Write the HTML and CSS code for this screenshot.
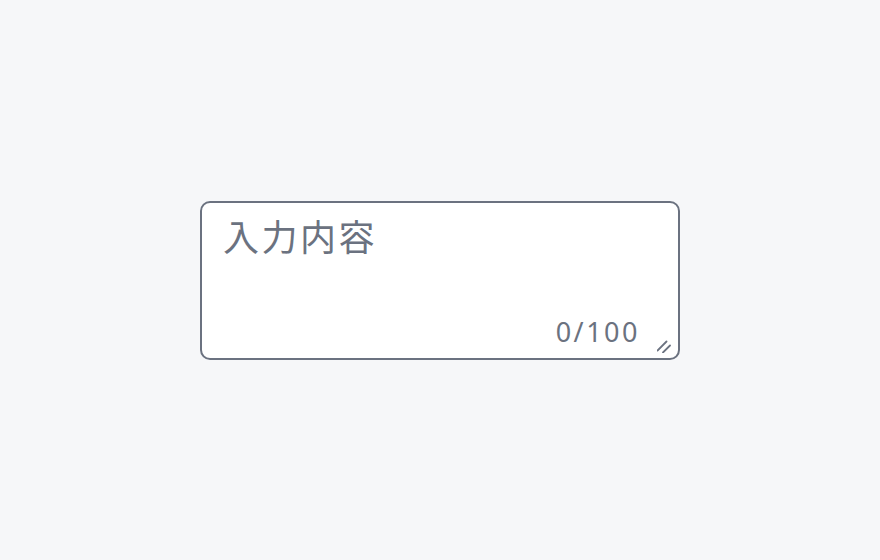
FILE: index.html
```html
<!DOCTYPE html>
<html lang="ja">
<head>
<meta charset="utf-8">
<link rel="stylesheet" href="styles.css">
</head>
<body>
<div class="field">
  <div class="placeholder">入力内容</div>
  <div class="footer">
    <span class="count">0/100</span>
    <svg class="grip" width="14" height="14" viewBox="0 0 14 14" aria-hidden="true">
      <path d="M0.5 11.5 L9.5 2.5 M6 13.5 L13 6.5" stroke="#6b7280" stroke-width="1.8" stroke-linecap="round" fill="none"/>
    </svg>
  </div>
</div>
</body>
</html>
```

FILE: styles.css
```css
html, body {
  margin: 0;
  padding: 0;
}
body {
  width: 880px;
  height: 560px;
  background: #f6f7f9;
  display: flex;
  align-items: center;
  justify-content: center;
  font-family: "Noto Sans CJK JP", "Noto Sans", sans-serif;
  color: #6b7280;
}
.field {
  box-sizing: border-box;
  width: 480px;
  height: 159px;
  background: #ffffff;
  border: 2px solid #6b7280;
  border-radius: 10px;
  display: flex;
  flex-direction: column;
  padding: 8px 7px 5px 21px;
}
.placeholder {
  font-size: 36px;
  line-height: 48px;
  letter-spacing: 2.5px;
}
.footer {
  margin-top: auto;
  display: flex;
  align-items: flex-end;
  justify-content: flex-end;
  gap: 17px;
}
.count {
  font-family: "Noto Sans", sans-serif;
  font-size: 27px;
  letter-spacing: 2.5px;
  line-height: 30px;
  margin-bottom: 6px;
}
.grip {
  display: block;
}
```
